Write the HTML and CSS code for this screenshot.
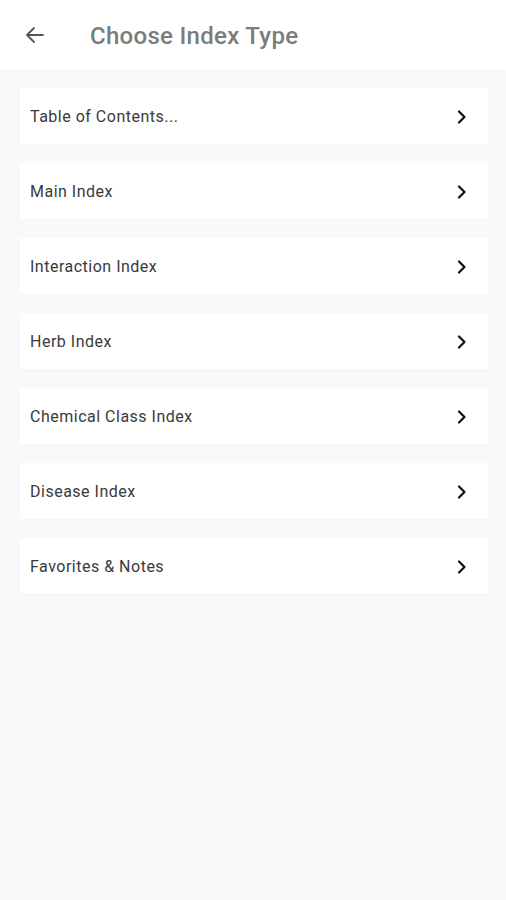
FILE: index.html
```html
<!DOCTYPE html>
<html lang="en">
<head>
  <meta charset="UTF-8">
  <meta name="viewport" content="width=device-width, initial-scale=1.0">
  <title>Choose Index Type</title>
  <link rel="stylesheet" href="styles.css">
</head>
<body>
  <header class="topbar">
    <button class="back" aria-label="Back">
      <svg width="24" height="24" viewBox="0 0 24 24"><path d="M20 12H5M11 5l-7 7 7 7" fill="none" stroke="#555" stroke-width="1.8" stroke-linecap="round" stroke-linejoin="round"/></svg>
    </button>
    <h1>Choose Index Type</h1>
  </header>

  <main class="list">
    <a class="item" href="#"><span>Table of Contents...</span><svg class="chev" viewBox="0 0 12 16"><path d="M3 2.5l5.5 5.5L3 13.5" /></svg></a>
    <a class="item" href="#"><span>Main Index</span><svg class="chev" viewBox="0 0 12 16"><path d="M3 2.5l5.5 5.5L3 13.5" /></svg></a>
    <a class="item" href="#"><span>Interaction Index</span><svg class="chev" viewBox="0 0 12 16"><path d="M3 2.5l5.5 5.5L3 13.5" /></svg></a>
    <a class="item" href="#"><span>Herb Index</span><svg class="chev" viewBox="0 0 12 16"><path d="M3 2.5l5.5 5.5L3 13.5" /></svg></a>
    <a class="item" href="#"><span>Chemical Class Index</span><svg class="chev" viewBox="0 0 12 16"><path d="M3 2.5l5.5 5.5L3 13.5" /></svg></a>
    <a class="item" href="#"><span>Disease Index</span><svg class="chev" viewBox="0 0 12 16"><path d="M3 2.5l5.5 5.5L3 13.5" /></svg></a>
    <a class="item" href="#"><span>Favorites &amp; Notes</span><svg class="chev" viewBox="0 0 12 16"><path d="M3 2.5l5.5 5.5L3 13.5" /></svg></a>
  </main>
</body>
</html>
```

FILE: styles.css
```css
html, body { height: 100%; }
body {
  margin: 0;
  font-family: Roboto, "Noto Sans", sans-serif;
  background: #f8f9fa;
}
.topbar {
  height: 70px;
  background: #fff;
  display: flex;
  align-items: center;
  box-shadow: 0 1px 3px rgba(0,0,0,0.03);
}
.back {
  background: none;
  border: 0;
  padding: 0;
  margin-left: 23px;
  width: 24px;
  height: 24px;
  display: flex;
}
.topbar h1 {
  margin: 2px 0 0 43px;
  font-size: 24px;
  font-weight: 500;
  letter-spacing: 0.3px;
  color: #7c7c7c;
}
.list {
  padding: 18px 18px 0 20px;
  display: flex;
  flex-direction: column;
  gap: 19px;
}
.item {
  box-sizing: border-box;
  height: 56px;
  background: #fff;
  display: flex;
  align-items: center;
  justify-content: space-between;
  padding: 1px 20px 0 10px;
  text-decoration: none;
  color: #3a3a3a;
  font-size: 16px;
  letter-spacing: 0.5px;
  box-shadow: 0 1px 4px rgba(0,0,0,0.02);
}
.chev {
  width: 12px;
  height: 16px;
  fill: none;
  stroke: #111;
  stroke-width: 2.2;
  stroke-linecap: round;
  stroke-linejoin: round;
}
```
